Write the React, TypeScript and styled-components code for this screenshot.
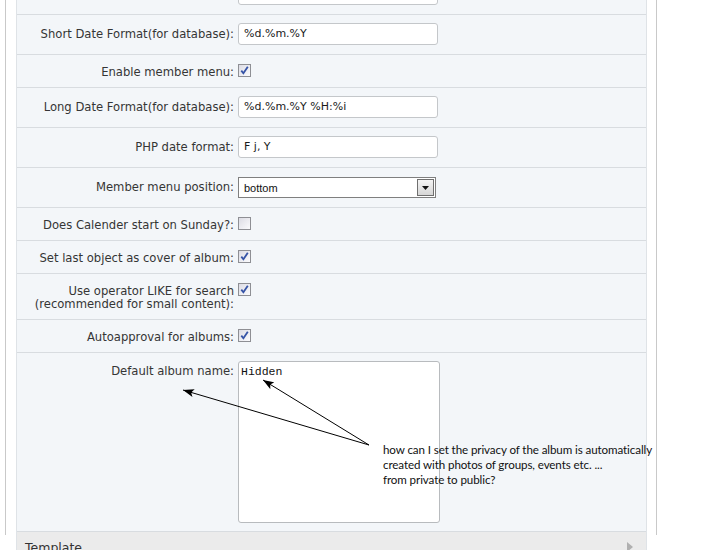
import React from "react";
import styled, { createGlobalStyle } from "styled-components";

const Global = createGlobalStyle`
  html, body { margin: 0; padding: 0; background: #ffffff; }
  body { font-family: "DejaVu Sans", Verdana, sans-serif; overflow: hidden; }
`;

const Page = styled.div`
  position: relative;
  width: 704px;
  height: 550px;
  overflow: hidden;
`;

const Frame = styled.div`
  box-sizing: border-box;
  margin-left: 5px;
  width: 652px;
  height: 560px;
  border-left: 1px solid #c9c9c9;
  border-right: 1px solid #c9c9c9;
  padding: 0 9px 0 10px;
`;

const Panel = styled.div`
  margin-top: -25px;
  background: #f3f6f9;
  border-left: 1px solid #dfe3e7;
  border-right: 1px solid #dfe3e7;
`;

const Row = styled.div<{ $pad: string }>`
  display: grid;
  grid-template-columns: 217px 1fr;
  column-gap: 4px;
  align-items: start;
  padding: ${(p) => p.$pad};
  border-bottom: 1px solid #d8dce0;
`;

const Label = styled.div<{ $lh: number; $shift?: number }>`
  text-align: right;
  font-size: 11.6px;
  color: #353535;
  line-height: ${(p) => p.$lh}px;
  padding-top: ${(p) => p.$shift ?? 0}px;
  margin-bottom: ${(p) => -(p.$shift ?? 0)}px;
  white-space: nowrap;
`;

const TextInput = styled.div`
  box-sizing: border-box;
  width: 200px;
  height: 22px;
  background: #ffffff;
  border: 1px solid #c4c7ca;
  border-radius: 3px;
  padding: 0 5px;
  font-family: Tahoma, "DejaVu Sans", sans-serif;
  font-size: 11px;
  line-height: 20px;
  color: #1a1a1a;
  display: flex;
  align-items: center;
`;

const SelectBox = styled.div`
  box-sizing: border-box;
  width: 198px;
  height: 21px;
  background: #ffffff;
  border: 1px solid #7f7f7f;
  display: flex;
  align-items: center;
  justify-content: space-between;
  padding: 0 1px 0 5px;
  font-family: "Liberation Sans", Arial, sans-serif;
  font-size: 11px;
  color: #111;
`;

const SelectButton = styled.div`
  box-sizing: border-box;
  width: 17px;
  height: 17px;
  border: 1px solid #6f6f6f;
  background: linear-gradient(#f4f4f4, #d6d6d6);
  display: flex;
  align-items: center;
  justify-content: center;
`;

const Check = styled.div`
  box-sizing: border-box;
  width: 13px;
  height: 13px;
  border: 1px solid #8e8f94;
  background: linear-gradient(135deg, #dcdce4, #fbfbfd);
  display: flex;
  align-items: center;
  justify-content: center;
`;

const TextArea = styled.div`
  box-sizing: border-box;
  width: 202px;
  height: 162px;
  background: #ffffff;
  border: 1px solid #b8bbbe;
  border-radius: 3px;
  padding: 3px 2px;
  font-family: "Liberation Mono", "Courier New", monospace;
  font-size: 11.5px;
  line-height: 14px;
  color: #111;
`;

const Header = styled.div`
  display: flex;
  align-items: center;
  justify-content: space-between;
  background: #ebebeb;
  height: 30px;
  padding: 0 13px 0 8px;
  font-size: 12.5px;
  color: #333;
`;

const Arrow = styled.span`
  width: 0;
  height: 0;
  border-top: 5px solid transparent;
  border-bottom: 5px solid transparent;
  border-left: 6px solid #b0b0b0;
`;

const Overlay = styled.svg`
  position: absolute;
  left: 0;
  top: 0;
  pointer-events: none;
`;

const Note = styled.div`
  position: absolute;
  left: 383px;
  top: 442px;
  font-family: Lato, "Open Sans", sans-serif;
  font-size: 11.6px;
  line-height: 15px;
  color: #111;
  white-space: nowrap;
  letter-spacing: -0.1px;
`;

const CheckMark = () => (
  <svg width="9" height="9" viewBox="0 0 9 9">
    <path d="M1.3 4.6 L3.4 7.2 L7.8 0.8" fill="none" stroke="#3553a6" strokeWidth="1.8" />
  </svg>
);

const CheckBox = ({ on }: { on: boolean }) => <Check>{on && <CheckMark />}</Check>;

const TEXT_PAD = "8px 0 9px";
const CHECK_PAD = "9px 0 10px";

export default function App() {
  return (
    <Page>
      <Global />
      <Frame>
        <Panel>
          <Row $pad={TEXT_PAD}>
            <Label $lh={22}></Label>
            <TextInput />
          </Row>
          <Row $pad={TEXT_PAD}>
            <Label $lh={22}>Short Date Format(for database):</Label>
            <TextInput>%d.%m.%Y</TextInput>
          </Row>
          <Row $pad={CHECK_PAD}>
            <Label $lh={13} $shift={2}>Enable member menu:</Label>
            <CheckBox on />
          </Row>
          <Row $pad={TEXT_PAD}>
            <Label $lh={22}>Long Date Format(for database):</Label>
            <TextInput>%d.%m.%Y %H:%i</TextInput>
          </Row>
          <Row $pad={TEXT_PAD}>
            <Label $lh={22}>PHP date format:</Label>
            <TextInput>F j, Y</TextInput>
          </Row>
          <Row $pad="9px 0 9px">
            <Label $lh={21}>Member menu position:</Label>
            <SelectBox>
              <span>bottom</span>
              <SelectButton>
                <svg width="7" height="4" viewBox="0 0 7 4">
                  <path d="M0 0 H7 L3.5 4 Z" fill="#111" />
                </svg>
              </SelectButton>
            </SelectBox>
          </Row>
          <Row $pad={CHECK_PAD}>
            <Label $lh={13} $shift={2}>Does Calender start on Sunday?:</Label>
            <CheckBox on={false} />
          </Row>
          <Row $pad={CHECK_PAD}>
            <Label $lh={13} $shift={2}>Set last object as cover of album:</Label>
            <CheckBox on />
          </Row>
          <Row $pad={CHECK_PAD}>
            <Label $lh={13} $shift={2}>
              Use operator LIKE for search
              <br />
              (recommended for small content):
            </Label>
            <CheckBox on />
          </Row>
          <Row $pad={CHECK_PAD}>
            <Label $lh={13} $shift={2}>Autoapproval for albums:</Label>
            <CheckBox on />
          </Row>
          <Row $pad="8px 0 8px">
            <Label $lh={20}>Default album name:</Label>
            <TextArea>Hidden</TextArea>
          </Row>
          <Header>
            <span>Template</span>
            <Arrow />
          </Header>
        </Panel>
      </Frame>
      <Overlay width="704" height="550" viewBox="0 0 704 550">
        <defs>
          <marker id="ah" markerWidth="11" markerHeight="8" refX="11" refY="4" orient="auto" markerUnits="userSpaceOnUse">
            <path d="M11 4 L0 0 L2.5 4 L0 8 Z" fill="#000" />
          </marker>
        </defs>
        <line x1="369" y1="445" x2="263" y2="380" stroke="#000" strokeWidth="1" markerEnd="url(#ah)" />
        <line x1="369" y1="445" x2="183" y2="390" stroke="#000" strokeWidth="1" markerEnd="url(#ah)" />
      </Overlay>
      <Note>
        how can I set the privacy of the album is automatically
        <br />
        created with photos of groups, events etc. ...
        <br />
        from private to public?
      </Note>
    </Page>
  );
}
